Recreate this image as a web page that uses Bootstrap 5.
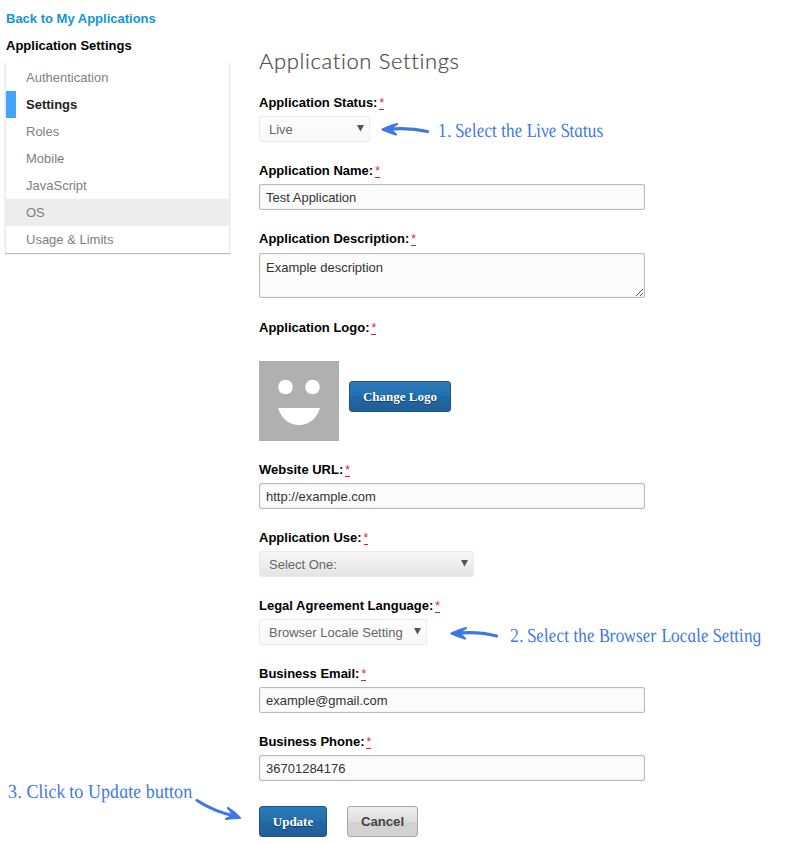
<!DOCTYPE html>
<html lang="en">
<head>
<meta charset="utf-8">
<meta name="viewport" content="width=device-width, initial-scale=1">
<title>Application Settings</title>
<link href="https://cdn.jsdelivr.net/npm/bootstrap@5.3.0/dist/css/bootstrap.min.css" rel="stylesheet">
<style>
body{font-family:"Liberation Sans",Arial,sans-serif;font-size:13px;line-height:20px;color:#000;background:#fff;height:844px;overflow:hidden}
.side{width:224px;margin-left:6px;padding-top:9px}
.side-title{margin-top:7px}
.side-menu{margin-top:7px;border:solid #e9e9e9;border-width:0 1px;box-shadow:0 1px 1px #bbb;height:190px;padding-top:1px;margin-left:-1px}
.side-menu .nav-link{height:27px;line-height:27px;padding:0 0 0 20px;color:#808080}
.side-menu .nav-link.active{color:#222;font-weight:bold;border-left:10px solid #42a5fb;padding-left:10px}
.side-menu .nav-link.hovered{background:#ededed}
.back-link{color:#1295d8}
.main-col{margin-left:29px;width:386px;padding-top:45px}
h1{font-family:Lato,sans-serif;font-weight:300;font-size:22px;line-height:32px;height:47px;margin:0;letter-spacing:.64px;color:#444;white-space:nowrap;-webkit-text-stroke:.2px #555}
.field{height:68px}
.field label,.field-label{display:block;height:20px;padding-top:1px;margin-bottom:4px;font-weight:bold}
.req{display:inline-block;color:#d22;font-weight:normal;font-size:12px;line-height:14px;height:14px;text-decoration:none;border-bottom:1px dashed #d22;margin-left:2px;cursor:help;vertical-align:top;margin-top:3px}
.form-control{height:26px;padding:0 6px;font-size:13px;line-height:20px;color:#333;background:#fcfcfc;border:1px solid #bbb;border-radius:2px;box-shadow:inset 0 0 2px #ddd}
textarea.form-control{height:45px;min-height:0;padding:4px 6px;margin-top:5px;resize:vertical}
.field-area{height:89px}
.picker{height:26px;border:1px solid #ebebeb;border-radius:2px;color:#666;padding:1px 5px 0 9px;background:linear-gradient(#fdfdfd,#f8f8f8);flex:none}
.picker.deep{background:linear-gradient(#f7f7f7,#e4e4e4)}
.picker svg{fill:#555;margin-top:-2px}
.w-live{width:111px}.w-use{width:215px}.w-lang{width:168px}
.note{fill:#3e78e5;font-family:"Liberation Serif",serif;font-style:italic;font-size:20px;overflow:visible;flex:none}
.arrow{fill:none;stroke:#3e78e5;stroke-width:3.200;stroke-linecap:round;stroke-linejoin:round;flex:none}
.arrow .head{fill:#3e78e5;stroke-width:2.200}
.note-live{margin-left:9px}.note-lang{margin-left:12px}
.arrow-live{margin-left:10px}.arrow-lang{margin-left:22px}
.logo-row{height:80px;margin:24px 0 18px}
.logo-btn{margin:-10px 0 0 10px}
.actions{gap:20px;margin-top:7px}
.btn{height:31px;border-radius:3px;font-weight:bold;padding:0;line-height:29px}
.btn-blue{font-family:"Liberation Serif",serif;font-size:13px;color:#fff;border:1px solid #1d5788;background:linear-gradient(#2978ba,#2370ad 48%,#2267a3 52%,#205f98);text-shadow:0 1px 1px #123c60}
.btn-grey{font-size:13.200px;color:#444;border:1px solid #a7a7a7;background:linear-gradient(#eee,#ddd 50%,#d2d2d2 54%,#d2d2d2)}
.w-logo{width:102px}.w-update{width:68px}.w-cancel{width:71px}
.step-three{left:9px;top:772px}
</style>
</head>
<body class="position-relative">
<div class="d-flex">
  <aside class="side flex-shrink-0">
    <a class="back-link d-block fw-bold text-decoration-none" href="#">Back to My Applications</a>
    <div class="fw-bold side-title">Application Settings</div>
    <nav class="side-menu nav flex-column flex-nowrap">
      <a class="nav-link" href="#">Authentication</a>
      <a class="nav-link active" href="#">Settings</a>
      <a class="nav-link" href="#">Roles</a>
      <a class="nav-link" href="#">Mobile</a>
      <a class="nav-link" href="#">JavaScript</a>
      <a class="nav-link hovered" href="#">OS</a>
      <a class="nav-link" href="#">Usage &amp; Limits</a>
    </nav>
  </aside>
  <main class="main-col flex-shrink-0">
    <h1>Application Settings</h1>
    <div class="field">
      <div class="field-label">Application Status:<abbr class="req">*</abbr></div>
      <div class="d-flex align-items-center">
        <div class="picker w-live d-flex align-items-center justify-content-between"><span>Live</span><svg width="7" height="7"><path d="M0 0h7L3.500 6.500z"/></svg></div>
        <svg class="arrow arrow-live" width="50" height="16" viewBox="0 0 50 16"><path d="M6 8.500Q28 6 47.500 10.500"/><path class="head" d="M17 3Q9 5 2.500 8.500Q8 11 16 13.500Q12 10 10 8.500Q12 5.500 17 3z"/></svg>
        <svg class="note note-live" width="166" height="26"><text transform="translate(0 21) skewX(10)" textLength="165" lengthAdjust="spacingAndGlyphs">1. Select the Live Status</text></svg>
      </div>
    </div>
    <div class="field">
      <label for="app-name">Application Name:<abbr class="req">*</abbr></label>
      <input id="app-name" class="form-control" value="Test Application">
    </div>
    <div class="field-area">
      <div class="field-label">Application Description:<abbr class="req">*</abbr></div>
      <textarea class="form-control" spellcheck="false">Example description</textarea>
    </div>
    <div class="field-label">Application Logo:<abbr class="req">*</abbr></div>
    <div class="logo-row d-flex align-items-center">
      <svg width="80" height="80"><path fill="#b0b0b0" d="M0 0h80v80H0z"/><g fill="#fff"><circle cx="26.500" cy="26" r="7.300"/><circle cx="53.500" cy="26" r="7.300"/><path d="M19 47h42C57 59 49 64 40 64S23 59 19 47z"/></g></svg>
      <button class="btn btn-blue w-logo logo-btn">Change Logo</button>
    </div>
    <div class="field">
      <label for="site">Website URL:<abbr class="req">*</abbr></label>
      <input id="site" class="form-control" value="http://example.com">
    </div>
    <div class="field">
      <div class="field-label">Application Use:<abbr class="req">*</abbr></div>
      <div class="picker deep w-use d-flex align-items-center justify-content-between"><span>Select One:</span><svg width="7" height="7"><path d="M0 0h7L3.500 6.500z"/></svg></div>
    </div>
    <div class="field">
      <div class="field-label">Legal Agreement Language:<abbr class="req">*</abbr></div>
      <div class="d-flex align-items-center">
        <div class="picker w-lang d-flex align-items-center justify-content-between"><span>Browser Locale Setting</span><svg width="7" height="7"><path d="M0 0h7L3.500 6.500z"/></svg></div>
        <svg class="arrow arrow-lang" width="50" height="16" viewBox="0 0 50 16"><path d="M6 9.500Q28 7 47.500 12"/><path class="head" d="M17 4Q9 6 2.500 9.500Q8 12 16 14.500Q12 11 10 9.500Q12 6.500 17 4z"/></svg>
        <svg class="note note-lang" width="252" height="26"><text transform="translate(0 23) skewX(10)" textLength="251" lengthAdjust="spacingAndGlyphs">2. Select the Browser Locale Setting</text></svg>
      </div>
    </div>
    <div class="field">
      <label for="mail">Business Email:<abbr class="req">*</abbr></label>
      <input id="mail" class="form-control" value="example@gmail.com">
    </div>
    <div class="field">
      <label for="phone">Business Phone:<abbr class="req">*</abbr></label>
      <input id="phone" class="form-control" value="36701284176">
    </div>
    <div class="d-flex actions">
      <button class="btn btn-blue w-update">Update</button>
      <button class="btn btn-grey w-cancel">Cancel</button>
    </div>
  </main>
</div>
<svg class="note step-three position-absolute" width="240" height="55"><text transform="translate(0 26) skewX(10)" textLength="184" lengthAdjust="spacingAndGlyphs">3. Click to Update button</text><g class="arrow"><path d="M188 28.500Q206 40 226 44"/><path class="head" d="M219 36Q225 40 231 46Q223 46 217 47Q222 45 224 43Q222 39 219 36z"/></g></svg>
</body>
</html>
